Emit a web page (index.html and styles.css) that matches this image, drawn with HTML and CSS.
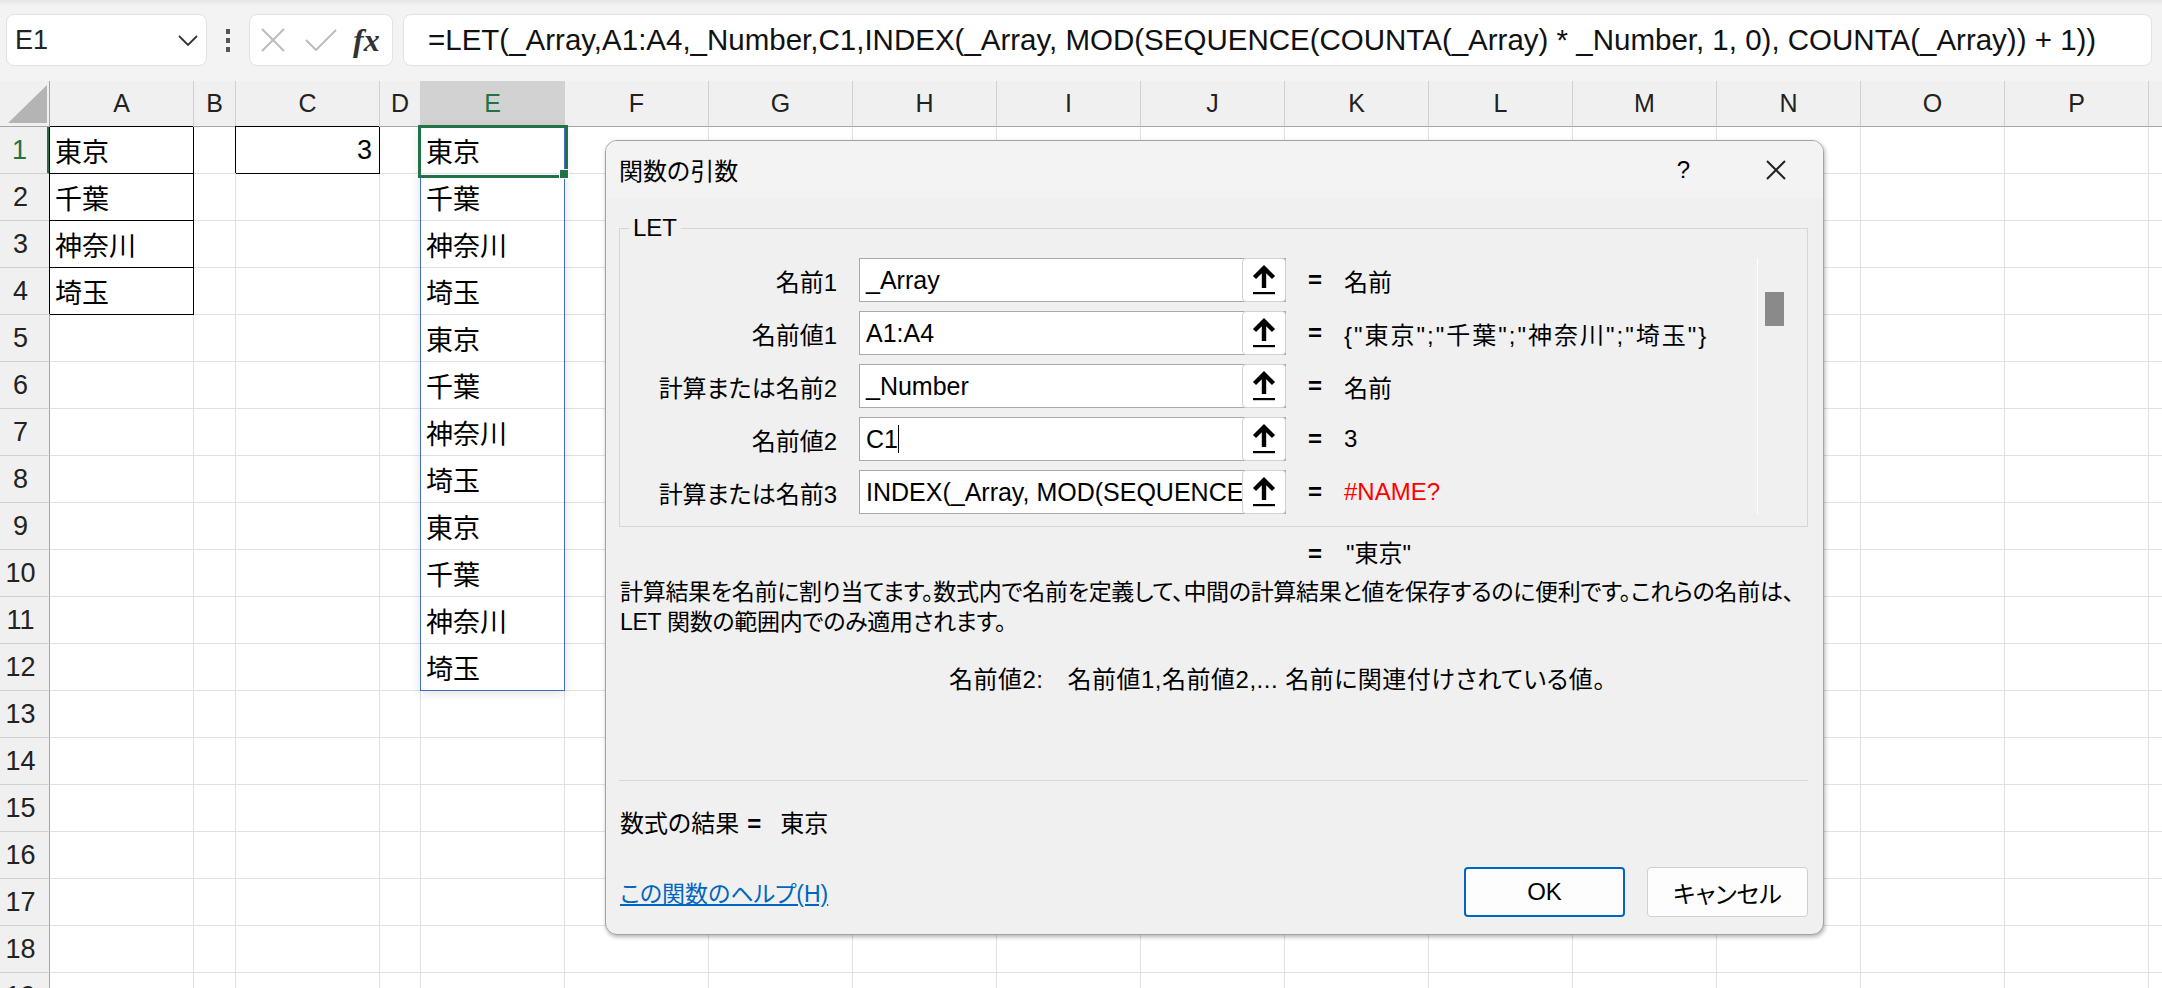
FILE: index.html
```html
<!DOCTYPE html>
<html lang="ja">
<head>
  <meta charset="UTF-8" />
  <title>関数の引数 - LET</title>
  <link rel="stylesheet" href="styles.css">
</head>
<body>

  <!-- Formula bar -->
  <div id="fbar">
    <div class="namebox">
      <span>E1</span>
      <svg class="chev" width="20" height="11" viewBox="0 0 20 11"><polyline points="1,1 10,10 19,1" /></svg>
    </div>
    <div class="kebab"><i></i><i></i><i></i></div>
    <div class="fxbox">
      <svg class="ico-x" width="24" height="24" viewBox="0 0 24 24"><path d="M1 1 L23 23 M23 1 L1 23" /></svg>
      <svg class="ico-ok" width="32" height="22" viewBox="0 0 32 22"><path d="M1 11 L11 21 L31 1" /></svg>
      <span class="fx">fx</span>
    </div>
    <div class="formula">=LET(_Array,A1:A4,_Number,C1,INDEX(_Array, MOD(SEQUENCE(COUNTA(_Array) * _Number, 1, 0), COUNTA(_Array)) + 1))</div>
  </div>

  <!-- Sheet -->
  <div id="sheet">
    <div id="grid"></div>
    <div id="spill"></div>
    <div id="sel"></div>
    <div id="handle"></div>
  </div>

  <!-- Function arguments dialog -->
  <div id="dialog">
    <div class="dlg-title">
      <span class="dlg-name">関数の引数</span>
      <span class="help">?</span>
      <svg class="close" width="20" height="20" viewBox="0 0 20 20"><path d="M1 1 L19 19 M19 1 L1 19" /></svg>
    </div>
    <div class="dlg-body">
      <fieldset class="group">
        <legend>LET</legend>
        <div class="args">
          <div class="scroll"><div class="thumb"></div></div>

          <label>名前1</label>
          <div class="field"><span class="txt">_Array</span><span class="ref"></span></div>
          <span class="eq">=</span>
          <span class="val">名前</span>

          <label>名前値1</label>
          <div class="field"><span class="txt">A1:A4</span><span class="ref"></span></div>
          <span class="eq">=</span>
          <span class="val arr">{"東京";"千葉";"神奈川";"埼玉"}</span>

          <label>計算または名前2</label>
          <div class="field"><span class="txt">_Number</span><span class="ref"></span></div>
          <span class="eq">=</span>
          <span class="val">名前</span>

          <label>名前値2</label>
          <div class="field"><span class="txt">C1<i class="caret"></i></span><span class="ref"></span></div>
          <span class="eq">=</span>
          <span class="val">3</span>

          <label>計算または名前3</label>
          <div class="field"><span class="txt">INDEX(_Array, MOD(SEQUENCE(COUNTA(_Array) * _Number, 1, 0), COUNTA(_Array)) + 1)</span><span class="ref"></span></div>
          <span class="eq">=</span>
          <span class="val err">#NAME?</span>
        </div>
      </fieldset>

      <div class="result"><span>=</span><span>"東京"</span></div>

      <p class="desc">計算結果を名前に割り当てます。数式内で名前を定義して、中間の計算結果と値を保存するのに便利です。これらの名前は、<br>LET 関数の範囲内でのみ適用されます。</p>

      <p class="argdesc"><span class="arg-name">名前値2:</span><span>名前値1,名前値2,... 名前に関連付けされている値。</span></p>

      <div class="sep"></div>

      <div class="fresult"><span>数式の結果</span><span class="feq">=</span><span>東京</span></div>

      <div class="footer">
        <a href="#" class="helplink">この関数のヘルプ(H)</a>
        <button class="btn ok">OK</button>
        <button class="btn">キャンセル</button>
      </div>
    </div>
  </div>

  <script>
    // ── sheet data ──────────────────────────────────────────────────
    const COLS = ['A','B','C','D','E','F','G','H','I','J','K','L','M','N','O','P','Q'];
    const ROWS = 19;
    const PREFS = ['東京','千葉','神奈川','埼玉'];
    const DATA = { A1:'東京', A2:'千葉', A3:'神奈川', A4:'埼玉', C1:'3' };
    for (let r = 1; r <= 12; r++) DATA['E' + r] = PREFS[(r - 1) % 4];
    const BOXED = ['A1','A2','A3','A4','C1'];

    // ── arrow for the ref buttons ───────────────────────────────────
    const ARROW = '<svg width="24" height="32" viewBox="0 0 24 32">' +
      '<path d="M12 4 V24 M2.5 13.5 L12 4 L21.5 13.5" fill="none" stroke="#000" stroke-width="4.4"/>' +
      '<rect x="1" y="28" width="22" height="2.2" fill="#000"/></svg>';
    document.querySelectorAll('.ref').forEach(el => el.innerHTML = ARROW);

    // ── grid drawing ────────────────────────────────────────────────
    function drawGrid() {
      const grid = document.getElementById('grid');
      const add = (cls, text) => {
        const el = document.createElement('div');
        el.className = cls;
        if (text) el.textContent = text;
        grid.appendChild(el);
        return el;
      };
      add('corner');
      COLS.forEach(c => add(c === 'E' ? 'ch active' : 'ch', c));
      for (let r = 1; r <= ROWS; r++) {
        add(r === 1 ? 'rh active' : 'rh', r);
        COLS.forEach(c => {
          const id = c + r;
          let cls = 'c';
          if (BOXED.includes(id)) cls += ' boxed';
          if (id === 'C1') cls += ' num';
          add(cls, DATA[id]);
        });
      }
    }
    drawGrid();
  </script>
</body>
</html>
```

FILE: styles.css
```css
* { box-sizing: border-box; }
html, body { margin: 0; }
body {
  width: 2162px; height: 988px; overflow: hidden; position: relative;
  background: #fff; color: #000;
  font-family: "Liberation Sans", "Noto Sans CJK JP", sans-serif;
}

/* Formula bar */
#fbar {
  height: 81px; display: flex; align-items: center;
  padding: 0 10px 1px 6px;
  background: linear-gradient(#e4e4e4, #f3f3f3 6px);
}
.namebox, .fxbox, .formula {
  height: 52px; background: #fff;
  border: 1px solid #e2e2e2; border-radius: 8px;
  display: flex; align-items: center;
}
.namebox {
  width: 201px; justify-content: space-between; padding: 0 8px 0 8px;
  font-size: 27px; color: #222;
}
.chev polyline { fill: none; stroke: #333; stroke-width: 1.8; }
.kebab { width: 4px; margin: 0 19px; display: flex; flex-direction: column; gap: 4px; }
.kebab i { width: 4px; height: 5px; background: #555; }
.fxbox { width: 144px; padding-left: 11px; }
.ico-x path, .ico-ok path { fill: none; stroke: #bcbcbc; stroke-width: 2; }
.ico-ok { margin-left: 20px; }
.fx {
  margin-left: 16px;
  font-family: "Liberation Serif", serif; font-style: italic; font-weight: bold;
  font-size: 32px; color: #333;
}
.formula {
  flex: 1; margin-left: 10px; padding-left: 24px;
  font-size: 29.5px; white-space: nowrap; overflow: hidden; color: #111;
}

/* Sheet grid */
#sheet { position: relative; }
#grid {
  display: grid;
  grid-template-columns: 50px 144px 42px 144px 41px repeat(13, 144px);
  grid-template-rows: 46px repeat(19, 47px);
}
.c {
  border-right: 1px solid #e1e1e1; border-bottom: 1px solid #e1e1e1;
  display: flex; align-items: center; padding-left: 5px;
  font-family: "Noto Sans CJK JP", sans-serif; font-size: 27px;
  white-space: nowrap; overflow: hidden;
}
.c.boxed {
  border-right-color: #000; border-bottom-color: #000;
  box-shadow: -1px -1px 0 #000;
}
.c.num { justify-content: flex-end; padding-right: 7px; font-family: "Liberation Sans", sans-serif; }
.corner, .ch, .rh { background: #f0f0f0; color: #222; display: flex; align-items: center; justify-content: center; }
.corner { position: relative; border-right: 1px solid #a6a6a6; border-bottom: 1px solid #a6a6a6; }
.corner::after {
  content: ""; position: absolute; left: 8px; top: 4px; width: 39px; height: 38px;
  background: #b4b4b4; clip-path: polygon(100% 0, 100% 100%, 0 100%);
}
.ch { border-right: 1px solid #d0d0d0; border-bottom: 1px solid #a6a6a6; font-size: 25px; }
.ch.active { background: #d2d2d2; color: #217346; }
.rh { border-right: 1px solid #a6a6a6; border-bottom: 1px solid #d0d0d0; padding-right: 8px; font-size: 27px; }
.rh.active { border-right: 3px solid #217346; color: #217346; }

/* Selection + spill outline (overlays) */
#spill {
  position: absolute; left: 420px; top: 45px; width: 145px; height: 565px;
  border: 1px solid #3c6ec6;
  box-shadow: 0 2px 10px rgba(0,0,0,.12);
  pointer-events: none;
}
#sel {
  position: absolute; left: 418px; top: 44px; width: 150px; height: 53px;
  border: 3px solid #217346; pointer-events: none;
}
#handle {
  position: absolute; left: 559px; top: 88px; width: 10px; height: 10px;
  background: #217346; border: 1px solid #fff;
}

/* Dialog */
#dialog {
  position: absolute; left: 605px; top: 140px; width: 1219px; height: 795px;
  background: #f0f0f0; border: 1px solid #a3a3a3; border-radius: 12px;
  box-shadow: 1px 2px 4px rgba(0,0,0,.3);
  display: flex; flex-direction: column; overflow: hidden;
  font-size: 24px; font-feature-settings: "palt";
}
.dlg-title {
  height: 57px; flex: none; background: #f3f3f3;
  display: flex; align-items: center; padding: 0 37px 0 13px;
}
.dlg-name { flex: 1; }
.help { margin-right: 76px; }
.close path { fill: none; stroke: #222; stroke-width: 2; }
.dlg-body { flex: 1; display: flex; flex-direction: column; padding: 16px 15px 17px 13px; }

.group { margin: 0; padding: 0 0 12px 0; border: 1px solid #d6d6d6; }
.group legend { margin-left: 9px; padding: 0 4px; line-height: 28px; }
.args {
  margin-top: 16px;
  display: grid;
  grid-template-columns: 217px 427px 14px 1fr 50px;
  grid-auto-rows: 44px; column-gap: 22px; row-gap: 9px;
  align-items: center;
}
.args label { text-align: right; white-space: nowrap; }
.scroll { grid-column: 5; grid-row: 1 / 6; align-self: stretch; border-left: 1px solid #fff; }
.thumb { margin: 34px 0 0 7px; width: 19px; height: 34px; background: #8a8a8a; }
.field {
  height: 44px; background: #fff; border: 1px solid #a9a9a9;
  display: flex; align-items: center;
}
.field .txt { flex: 1; padding-left: 6px; white-space: nowrap; overflow: hidden; font-size: 25px; }
.caret { display: inline-block; width: 1px; height: 28px; background: #000; vertical-align: -5px; }
.ref {
  width: 44px; height: 44px; margin-right: -1px; flex: none;
  background: #fff; border: 1px solid #d2d2d2; border-radius: 4px;
  display: flex; align-items: center; justify-content: center;
}
.eq { font-weight: bold; }
.val { white-space: nowrap; }
.val.arr { letter-spacing: 2px; }
.val.err { color: #ff0000; }

.result { margin-top: 13px; padding-left: 689px; line-height: 28px; display: flex; gap: 24px; }
.result span:first-child { font-weight: bold; }
.desc { margin: 9px 0 0 1px; line-height: 30px; white-space: nowrap; font-size: 23px; letter-spacing: -0.3px; }
.argdesc { margin: 28px 0 0 330px; line-height: 30px; display: flex; gap: 24px; white-space: nowrap; letter-spacing: .5px; }
.sep { margin-top: 85px; height: 1px; background: #d9d9d9; }
.fresult { margin: 28px 0 0 1px; line-height: 30px; display: flex; }
.feq { margin: 0 19px 0 8px; font-weight: bold; }

.footer { margin-top: 28px; display: flex; align-items: center; gap: 22px; }
.helplink { flex: 1; color: #0067c0; margin-left: 1px; font-size: 23px; }
.btn {
  width: 161px; height: 50px; background: #fdfdfd;
  border: 1px solid #d0d0d0; border-radius: 4px;
  font-family: "Liberation Sans", "Noto Sans CJK JP", sans-serif; font-size: 24px;
  font-feature-settings: "palt"; color: #000;
}
.btn.ok { border: 2px solid #0067c0; }
```
